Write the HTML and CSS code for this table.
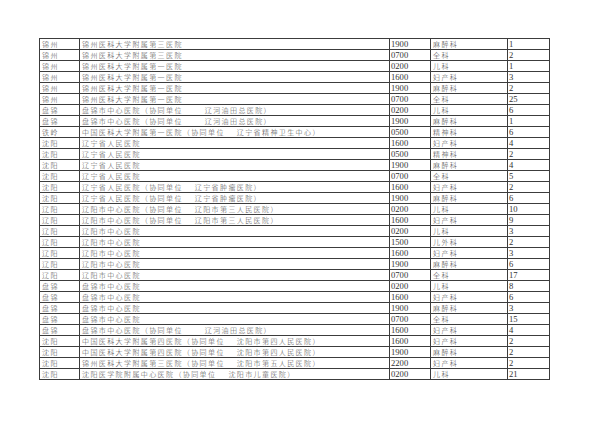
FILE: index.html
```html
<!DOCTYPE html>
<html lang="zh">
<head>
<meta charset="utf-8">
<title>招生计划</title>
<link rel="stylesheet" href="styles.css">
</head>
<body>
<table class="sheet">
<colgroup>
<col class="c-city"><col class="c-hosp"><col class="c-code"><col class="c-dept"><col class="c-count">
</colgroup>
<tbody>
<tr><td>锦州</td><td>锦州医科大学附属第三医院</td><td class="num">1900</td><td>麻醉科</td><td class="num">1</td></tr>
<tr><td>锦州</td><td>锦州医科大学附属第三医院</td><td class="num">0700</td><td>全科</td><td class="num">2</td></tr>
<tr><td>锦州</td><td>锦州医科大学附属第一医院</td><td class="num">0200</td><td>儿科</td><td class="num">1</td></tr>
<tr><td>锦州</td><td>锦州医科大学附属第一医院</td><td class="num">1600</td><td>妇产科</td><td class="num">3</td></tr>
<tr><td>锦州</td><td>锦州医科大学附属第一医院</td><td class="num">1900</td><td>麻醉科</td><td class="num">2</td></tr>
<tr><td>锦州</td><td>锦州医科大学附属第一医院</td><td class="num">0700</td><td>全科</td><td class="num">25</td></tr>
<tr><td>盘锦</td><td>盘锦市中心医院（协同单位<span class="gap wide"></span>辽河油田总医院）</td><td class="num">0200</td><td>儿科</td><td class="num">6</td></tr>
<tr><td>盘锦</td><td>盘锦市中心医院（协同单位<span class="gap wide"></span>辽河油田总医院）</td><td class="num">1900</td><td>麻醉科</td><td class="num">1</td></tr>
<tr><td>铁岭</td><td>中国医科大学附属第一医院（协同单位<span class="gap"></span>辽宁省精神卫生中心）</td><td class="num">0500</td><td>精神科</td><td class="num">6</td></tr>
<tr><td>沈阳</td><td>辽宁省人民医院</td><td class="num">1600</td><td>妇产科</td><td class="num">4</td></tr>
<tr><td>沈阳</td><td>辽宁省人民医院</td><td class="num">0500</td><td>精神科</td><td class="num">2</td></tr>
<tr><td>沈阳</td><td>辽宁省人民医院</td><td class="num">1900</td><td>麻醉科</td><td class="num">4</td></tr>
<tr><td>沈阳</td><td>辽宁省人民医院</td><td class="num">0700</td><td>全科</td><td class="num">5</td></tr>
<tr><td>沈阳</td><td>辽宁省人民医院（协同单位<span class="gap"></span>辽宁省肿瘤医院）</td><td class="num">1600</td><td>妇产科</td><td class="num">2</td></tr>
<tr><td>沈阳</td><td>辽宁省人民医院（协同单位<span class="gap"></span>辽宁省肿瘤医院）</td><td class="num">1900</td><td>麻醉科</td><td class="num">6</td></tr>
<tr><td>辽阳</td><td>辽阳市中心医院（协同单位<span class="gap"></span>辽阳市第三人民医院）</td><td class="num">0200</td><td>儿科</td><td class="num">10</td></tr>
<tr><td>辽阳</td><td>辽阳市中心医院（协同单位<span class="gap"></span>辽阳市第三人民医院）</td><td class="num">1600</td><td>妇产科</td><td class="num">9</td></tr>
<tr><td>辽阳</td><td>辽阳市中心医院</td><td class="num">0200</td><td>儿科</td><td class="num">3</td></tr>
<tr><td>辽阳</td><td>辽阳市中心医院</td><td class="num">1500</td><td>儿外科</td><td class="num">2</td></tr>
<tr><td>辽阳</td><td>辽阳市中心医院</td><td class="num">1600</td><td>妇产科</td><td class="num">3</td></tr>
<tr><td>辽阳</td><td>辽阳市中心医院</td><td class="num">1900</td><td>麻醉科</td><td class="num">6</td></tr>
<tr><td>辽阳</td><td>辽阳市中心医院</td><td class="num">0700</td><td>全科</td><td class="num">17</td></tr>
<tr><td>盘锦</td><td>盘锦市中心医院</td><td class="num">0200</td><td>儿科</td><td class="num">8</td></tr>
<tr><td>盘锦</td><td>盘锦市中心医院</td><td class="num">1600</td><td>妇产科</td><td class="num">6</td></tr>
<tr><td>盘锦</td><td>盘锦市中心医院</td><td class="num">1900</td><td>麻醉科</td><td class="num">3</td></tr>
<tr><td>盘锦</td><td>盘锦市中心医院</td><td class="num">0700</td><td>全科</td><td class="num">15</td></tr>
<tr><td>盘锦</td><td>盘锦市中心医院（协同单位<span class="gap wide"></span>辽河油田总医院）</td><td class="num">1600</td><td>妇产科</td><td class="num">4</td></tr>
<tr><td>沈阳</td><td>中国医科大学附属第四医院（协同单位<span class="gap"></span>沈阳市第四人民医院）</td><td class="num">1600</td><td>妇产科</td><td class="num">2</td></tr>
<tr><td>沈阳</td><td>中国医科大学附属第四医院（协同单位<span class="gap"></span>沈阳市第四人民医院）</td><td class="num">1900</td><td>麻醉科</td><td class="num">2</td></tr>
<tr><td>沈阳</td><td>锦州医科大学附属第三医院（协同单位<span class="gap"></span>沈阳市第五人民医院）</td><td class="num">2200</td><td>妇产科</td><td class="num">2</td></tr>
<tr><td>沈阳</td><td>沈阳医学院附属中心医院（协同单位<span class="gap"></span>沈阳市儿童医院）</td><td class="num">0200</td><td>儿科</td><td class="num">21</td></tr>
</tbody>
</table>
</body>
</html>
```
FILE: styles.css
```css
html, body {
  margin: 0;
  padding: 0;
  background: #ffffff;
}

body {
  padding: 38px 0 0 39px;
}

.sheet {
  border-collapse: collapse;
  table-layout: fixed;
  width: 510px;
  font-family: "Noto Sans CJK SC", "Liberation Serif", sans-serif;
  color: #4a4a4a;
}

.c-city { width: 40px; }
.c-hosp { width: 310px; }
.c-code { width: 41px; }
.c-dept { width: 77px; }
.c-count { width: 42px; }

.sheet td {
  border: 1px solid #3c3c3c;
  height: 10px;
  padding: 0 0 0 2px;
  font-size: 7px;
  font-weight: 300;
  letter-spacing: 1.4px;
  line-height: 10px;
  white-space: nowrap;
  overflow: hidden;
  vertical-align: bottom;
}

.sheet td.num {
  font-family: "Liberation Serif", serif;
  font-size: 8.6px;
  font-weight: 400;
  letter-spacing: 0;
  padding-left: 1px;
  color: #333333;
}

.gap {
  display: inline-block;
  width: 12px;
}

.gap.wide {
  width: 22px;
}
```
